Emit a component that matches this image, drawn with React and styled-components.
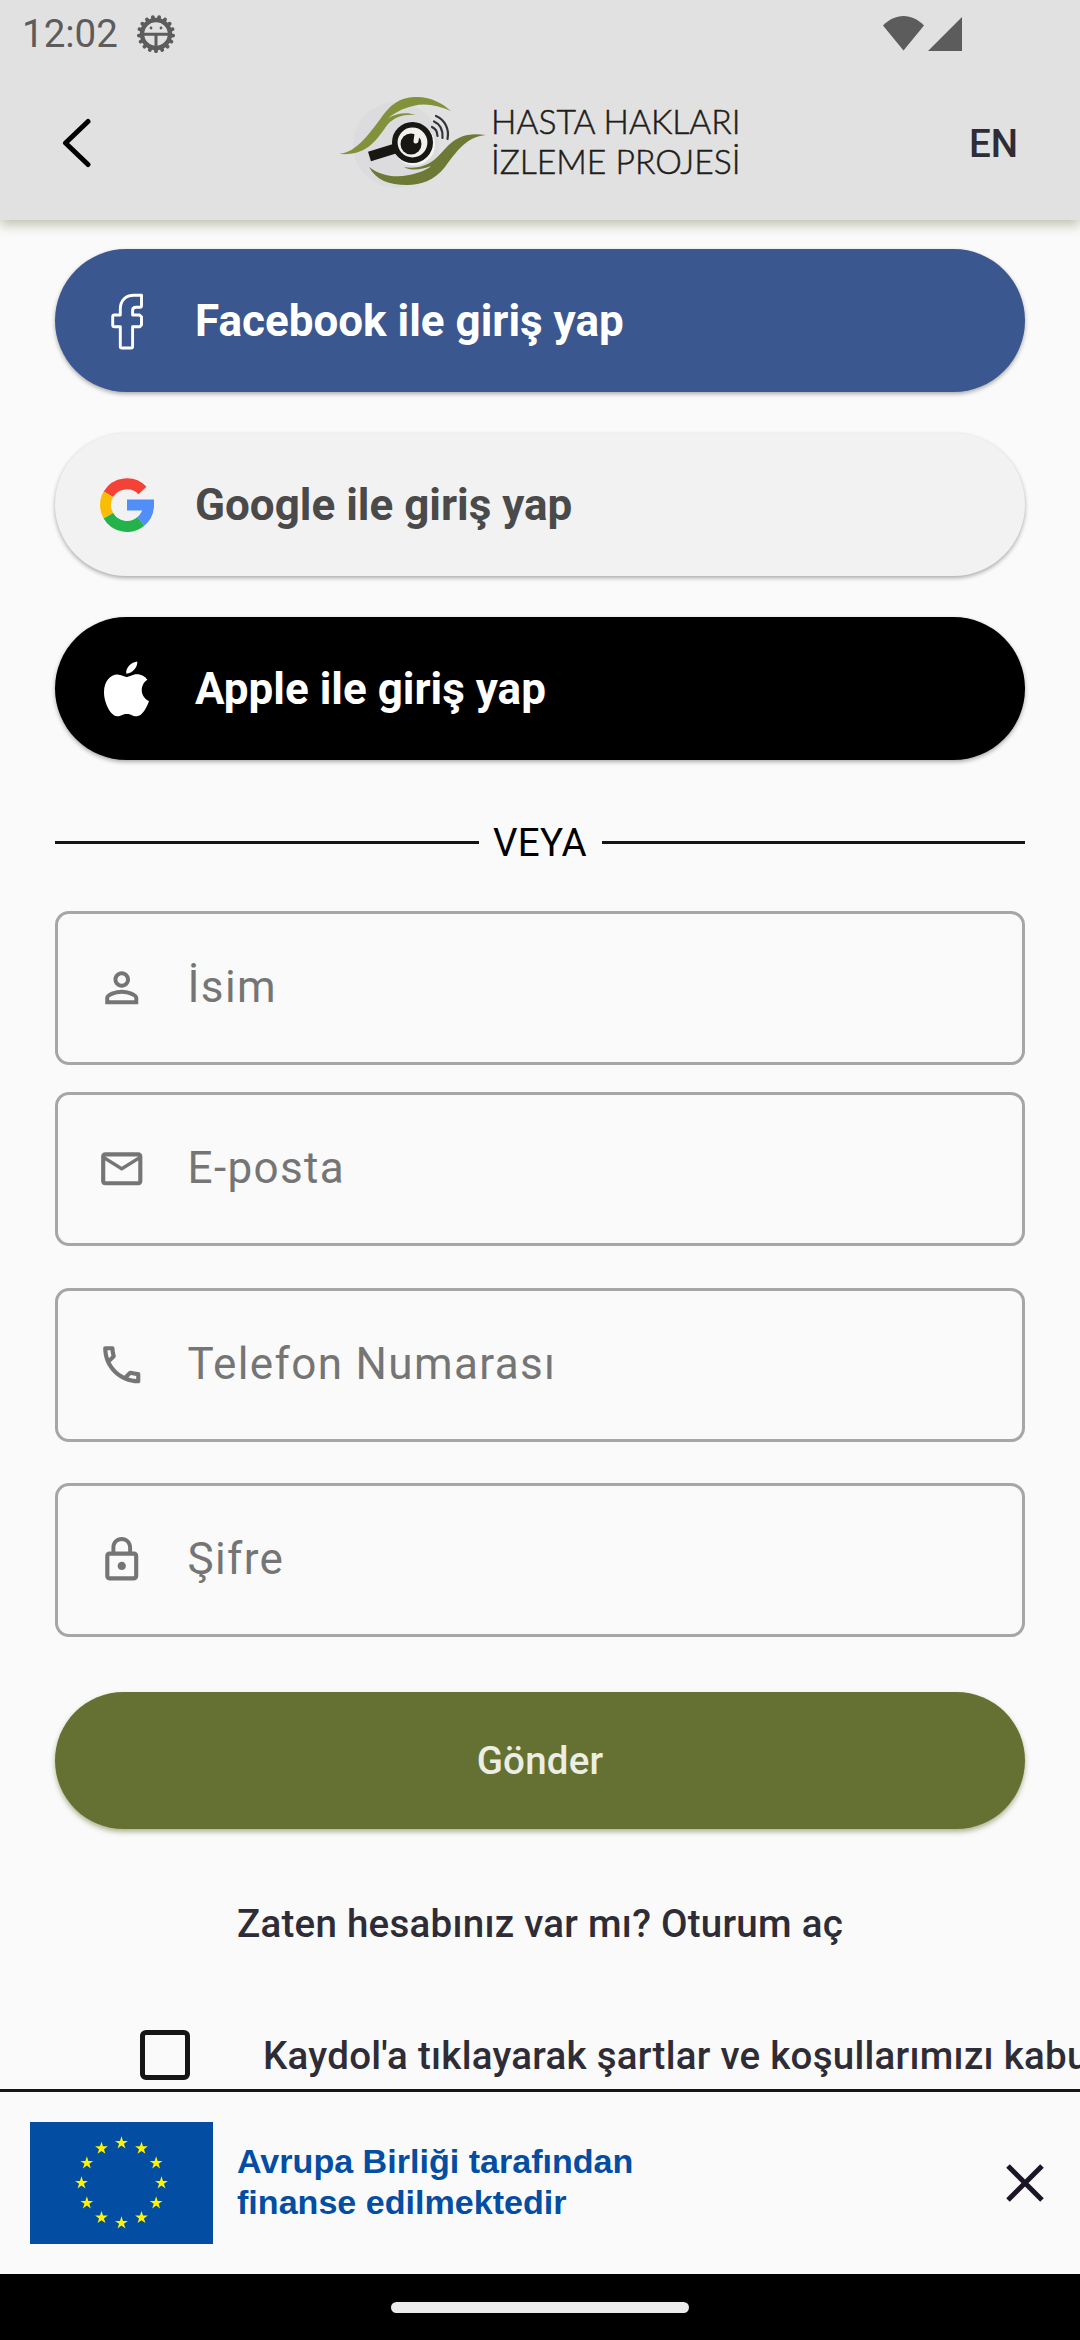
import React from 'react'
import styled, { createGlobalStyle } from 'styled-components'
import { MdPersonOutline, MdMailOutline, MdOutlinePhone, MdLockOutline } from 'react-icons/md'

const GlobalStyle = createGlobalStyle`
    * {
        box-sizing: border-box;
    }
    body {
        margin: 0;
        background-color: #fafafa;
        font-family: Roboto, sans-serif;
    }
`

const Container = styled.div`
    display: flex;
    flex-direction: column;
    width: 1080px;
    height: 2340px;
    overflow: hidden;
    background-color: #fafafa;
`

const Header = styled.header`
    flex-shrink: 0;
    height: 220px;
    background-color: #e1e1e1;
    box-shadow: 0 5px 11px rgba(96, 106, 50, 0.38);
`

const StatusBar = styled.div`
    display: flex;
    align-items: center;
    justify-content: space-between;
    height: 67px;
    padding: 0 118px 0 22px;
`

const StatusGroup = styled.div`
    display: flex;
    align-items: center;
    gap: ${(props) => props.$gap}px;
`

const Clock = styled.span`
    color: #5c5c5c;
    font-size: 38.5px;
    line-height: 46px;
`

const Toolbar = styled.div`
    display: grid;
    grid-template-columns: 340px 400px 340px;
    align-items: center;
    height: 153px;
    padding-bottom: 1px;
`

const BackButton = styled.button`
    display: flex;
    width: 40px;
    margin: 0 0 0 57px;
    padding: 0;
    border: none;
    background: none;
`

const Language = styled.span`
    justify-self: end;
    margin-right: 62px;
    color: #2e2c36;
    font-size: 38.5px;
    font-weight: 500;
`

const Content = styled.main`
    display: flex;
    flex: 1;
    flex-direction: column;
    min-height: 0;
    padding: 29px 55px 0;
    overflow: hidden;
`

const SocialList = styled.div`
    display: flex;
    flex-direction: column;
    gap: 41px;
`

const SocialButton = styled.button`
    display: flex;
    align-items: center;
    height: 143px;
    padding: 0 0 0 45px;
    border: none;
    border-radius: 72px;
    background-color: ${(props) => props.$background};
    color: ${(props) => props.$color};
    font-family: Roboto, sans-serif;
    font-size: 44px;
    font-weight: 700;
    box-shadow: 0 2px 4px rgba(0, 0, 0, 0.32);
`

const SocialIcon = styled.span`
    display: flex;
    width: 54px;
    margin-right: 41px;
`

const Divider = styled.div`
    display: flex;
    align-items: center;
    height: 46px;
    margin: 59px 0 46px;
    color: #000;
    font-size: 38.5px;
    white-space: nowrap;
`

const Line = styled.span`
    flex: 1;
    height: 3px;
    background-color: #141414;
`

const DividerText = styled.span`
    width: 123px;
    letter-spacing: 0.3px;
    text-align: center;
`

const Field = styled.label`
    display: flex;
    flex-shrink: 0;
    align-items: center;
    height: 154px;
    margin-bottom: ${(props) => props.$space}px;
    padding-left: 39px;
    border: 3px solid #a6a6a6;
    border-radius: 14px;
    color: #757575;
`

const Input = styled.input`
    flex: 1;
    height: 60px;
    margin: 0 0 3px 41px;
    padding: 0;
    border: none;
    outline: none;
    background: none;
    font-family: Roboto, sans-serif;
    font-size: 44px;
    letter-spacing: 1.375px;

    &::placeholder {
        color: #757575;
        opacity: 1;
    }
`

const SubmitButton = styled.button`
    flex-shrink: 0;
    height: 137px;
    padding: 0;
    border: none;
    border-radius: 69px;
    background-color: #657132;
    color: #eceee3;
    font-family: Roboto, sans-serif;
    font-size: 38.5px;
    font-weight: 500;
    letter-spacing: 0.2px;
    box-shadow: 0 3px 5px rgba(101, 113, 50, 0.5);
`

const LoginLink = styled.p`
    height: 46px;
    margin: 72px 0 0;
    color: #2e2c36;
    font-size: 38.5px;
    font-weight: 500;
    letter-spacing: 0.26px;
    line-height: 46px;
    text-align: center;
`

const Terms = styled.label`
    display: flex;
    align-items: center;
    height: 50px;
    margin-top: 83px;
    padding-left: 85px;
    color: #2e2c36;
    font-size: 38.5px;
    font-weight: 500;
    letter-spacing: 0.26px;
    white-space: nowrap;
`

const CheckBox = styled.span`
    flex-shrink: 0;
    width: 50px;
    height: 50px;
    margin-right: 73px;
    border: 5px solid #161616;
    border-radius: 6px;
`

const Banner = styled.footer`
    display: flex;
    flex-shrink: 0;
    align-items: center;
    height: 185px;
    padding: 0 35px 0 30px;
    border-top: 3px solid #161616;
    background-color: #fafafa;
`

const BannerText = styled.p`
    flex: 1;
    margin: 0 0 0 24px;
    padding-bottom: 2px;
    color: #034ea2;
    font-family: 'Liberation Sans', sans-serif;
    font-size: 34.1px;
    font-weight: 700;
    line-height: 41px;
`

const NavigationBar = styled.div`
    display: flex;
    flex-shrink: 0;
    align-items: center;
    justify-content: center;
    height: 66px;
    background-color: #000;
`

const HomeHandle = styled.span`
    width: 298px;
    height: 11px;
    border-radius: 6px;
    background-color: #ebebeb;
`

const teeth = Array.from({ length: 17 }, (_, i) => 90 + (i * 360) / 17)
const stars = Array.from({ length: 12 }, (_, i) => (i * Math.PI) / 6)

const starPoints = (cx, cy, radius) =>
    Array.from({ length: 10 }, (_, i) => {
        const r = i % 2 ? radius * 0.382 : radius
        const angle = (i * Math.PI) / 5
        return `${cx + r * Math.sin(angle)},${cy - r * Math.cos(angle)}`
    }).join(' ')

const GearIcon = () => (
    <svg width="40" height="40" viewBox="-20 -20 40 40">
        <g stroke="#5c5c5c" strokeWidth="3.8" strokeLinecap="round">
            {teeth.map((angle) => (
                <path key={angle} d="M14 0H17.2" transform={`rotate(${angle})`} />
            ))}
        </g>
        <circle r="14" fill="none" stroke="#5c5c5c" strokeWidth="4.4" />
        <path d="M-12 0.3H12M0 0.3V13" stroke="#5c5c5c" strokeWidth="3" />
        <circle cx="-5" cy="-6" r="1.4" fill="#5c5c5c" />
        <circle cx="5" cy="-6" r="1.4" fill="#5c5c5c" />
    </svg>
)

const WifiIcon = () => (
    <svg width="41" height="35" viewBox="0 0 41 35">
        <path d="M20.5 34.5L0 9.5C6 3.5 13 0 20.5 0S35 3.5 41 9.5Z" fill="#5c5c5c" />
    </svg>
)

const SignalIcon = () => (
    <svg width="34" height="34" viewBox="0 0 34 34">
        <path d="M0 34H34V0Z" fill="#5c5c5c" />
    </svg>
)

const Logo = () => (
    <svg width="400" height="100" viewBox="340 93 400 100">
        <circle cx="396" cy="145" r="43" fill="#dcdcde" />
        <path
            d="M339 154C357 152 369 134 381 118C393 101 403 97 417 97C432 97 443 104 451 111C437 105 425 103 413 106C403 108 393 114 388 118C397 113 407 112 416 115C404 114 395 117 388 124C376 140 368 156 339 154Z"
            fill="#82923a"
        />
        <path
            d="M369 167C381 176 395 178 409 175C419 173 427 170 431 166C421 170 411 171 404 167C414 169 425 167 434 160C447 150 453 130 486 135C466 137 457 151 445 167C435 180 421 185 407 185C389 185 376 180 369 167Z"
            fill="#6c7a35"
        />
        <circle cx="414" cy="144.500" r="18" fill="#e9e9e8" stroke="#f4f4f2" strokeWidth="6" />
        <path d="M369.5 156.5L397 148" stroke="#181713" strokeWidth="10" />
        <circle cx="412.5" cy="142.5" r="17.7" fill="#f1f1f0" stroke="#181713" strokeWidth="5.6" />
        <circle cx="411" cy="144" r="10.5" fill="#181713" />
        <path d="M416 141L417 134" stroke="#f1f1f0" strokeWidth="5" strokeLinecap="round" />
        <g fill="none" stroke="#33333a" strokeWidth="2.2" strokeLinecap="round">
            <path d="M432 127C436 129 437 131 437.5 136" />
            <path d="M434 121.500C440 124 443 130 442.500 138" />
            <path d="M436 116C445 120 449.500 129 447.500 139" />
        </g>
        <g fill="#1d1d1b" stroke="#1d1d1b" strokeWidth="0.5" fontFamily="Lato, sans-serif" fontSize="33.4" fontWeight="300">
            <text x="491" y="133.500" textLength="249.500" lengthAdjust="spacingAndGlyphs">HASTA HAKLARI</text>
            <text x="491" y="174" textLength="249.500" lengthAdjust="spacingAndGlyphs">İZLEME PROJESİ</text>
        </g>
    </svg>
)

const FacebookIcon = () => (
    <svg width="54" height="66" viewBox="0 0 54 66">
        <path
            d="M41.500 7.200H34C25.500 7.200 20.300 12.500 20.300 21V27H14.500Q12.700 27 12.700 28.800V37Q12.700 38.800 14.500 38.800H20.300V58.500Q20.300 60 22 60H31Q32.600 60 32.600 58.500V38.800H39.500L41.500 37V28.800L39.500 27H32.600V22.500Q32.600 19.300 36 19.300H40Q41.500 19.300 41.500 17.800Z"
            fill="none"
            stroke="#fff"
            strokeWidth="2.900"
            strokeLinejoin="round"
        />
    </svg>
)

const GoogleIcon = () => (
    <svg width="54" height="54" viewBox="0 0 54 54">
        <g fill="none" strokeWidth="11">
            <path d="M42.500 12.500A21.500 21.500 0 0 0 8.400 16.300" stroke="#f44336" />
            <path d="M8.400 16.300A21.500 21.500 0 0 0 8.400 37.700" stroke="#fbbc05" />
            <path d="M8.400 37.700A21.500 21.500 0 0 0 41 43.300" stroke="#23b34a" />
            <path d="M41 43.300A21.500 21.500 0 0 0 48.500 27H27" stroke="#518ef8" />
        </g>
    </svg>
)

const AppleIcon = () => (
    <svg width="54" height="56" viewBox="0 0 54 56">
        <path
            d="M37.300 0.500C37.800 6 32.500 12.600 26.300 12.700C25.300 7 31.500 0.800 37.300 0.500ZM26.500 16C29 16 32.200 13.200 37 13.200C41.500 13.200 45.200 15.500 47.400 18.800C39.200 23.800 40.300 36.400 49 40C47 46.500 42.200 54.900 36.900 55.300C32.700 55.600 31.900 52.900 27.100 52.900C22.300 52.900 21.200 55.200 17.300 55.300C11.200 55.500 4 42.700 4 31.300C4 20 10.500 13.700 17.300 13.500C21.200 13.400 24.300 16 26.500 16Z"
            fill="#fff"
        />
    </svg>
)

const EuFlag = () => (
    <svg width="183" height="122" viewBox="0 0 183 122">
        <rect width="183" height="122" fill="#034ea2" />
        {stars.map((angle) => (
            <polygon
                key={angle}
                points={starPoints(91.5 + 40 * Math.sin(angle), 61 - 40 * Math.cos(angle), 6.7)}
                fill="#fff200"
            />
        ))}
    </svg>
)

const socials = [
    { name: 'Facebook', background: '#3b578f', color: '#fff', icon: <FacebookIcon /> },
    { name: 'Google', background: '#f2f2f2', color: '#4a4a4a', icon: <GoogleIcon /> },
    { name: 'Apple', background: '#000', color: '#fff', icon: <AppleIcon /> },
]

const fields = [
    { label: 'İsim', type: 'text', space: 27, Icon: MdPersonOutline },
    { label: 'E-posta', type: 'email', space: 42, Icon: MdMailOutline },
    { label: 'Telefon Numarası', type: 'tel', space: 41, Icon: MdOutlinePhone },
    { label: 'Şifre', type: 'password', space: 55, Icon: MdLockOutline },
]

const App = () => {
    return (
        <Container>
            <GlobalStyle />
            <Header>
                <StatusBar>
                    <StatusGroup $gap={18}>
                        <Clock>12:02</Clock>
                        <GearIcon />
                    </StatusGroup>
                    <StatusGroup $gap={4}>
                        <WifiIcon />
                        <SignalIcon />
                    </StatusGroup>
                </StatusBar>
                <Toolbar>
                    <BackButton aria-label="Geri">
                        <svg width="40" height="50" viewBox="0 0 40 50">
                            <path d="M31 3.500L8.500 25L31 46.500" fill="none" stroke="#000" strokeWidth="5" strokeLinecap="round" strokeLinejoin="round" />
                        </svg>
                    </BackButton>
                    <Logo />
                    <Language>EN</Language>
                </Toolbar>
            </Header>
            <Content>
                <SocialList>
                    {socials.map((social) => (
                        <SocialButton key={social.name} $background={social.background} $color={social.color}>
                            <SocialIcon>{social.icon}</SocialIcon>
                            {social.name} ile giriş yap
                        </SocialButton>
                    ))}
                </SocialList>
                <Divider>
                    <Line />
                    <DividerText>VEYA</DividerText>
                    <Line />
                </Divider>
                {fields.map(({ label, type, space, Icon }) => (
                    <Field key={label} $space={space}>
                        <Icon size={49.5} />
                        <Input type={type} placeholder={label} />
                    </Field>
                ))}
                <SubmitButton>Gönder</SubmitButton>
                <LoginLink>Zaten hesabınız var mı? Oturum aç</LoginLink>
                <Terms>
                    <CheckBox />
                    Kaydol'a tıklayarak şartlar ve koşullarımızı kabul
                </Terms>
            </Content>
            <Banner>
                <EuFlag />
                <BannerText>
                    Avrupa Birliği tarafından
                    <br />
                    finanse edilmektedir
                </BannerText>
                <svg width="40" height="40" viewBox="0 0 40 40">
                    <path d="M3 3L37 37M37 3L3 37" stroke="#1c1427" strokeWidth="5" />
                </svg>
            </Banner>
            <NavigationBar>
                <HomeHandle />
            </NavigationBar>
        </Container>
    )
}

export default App
